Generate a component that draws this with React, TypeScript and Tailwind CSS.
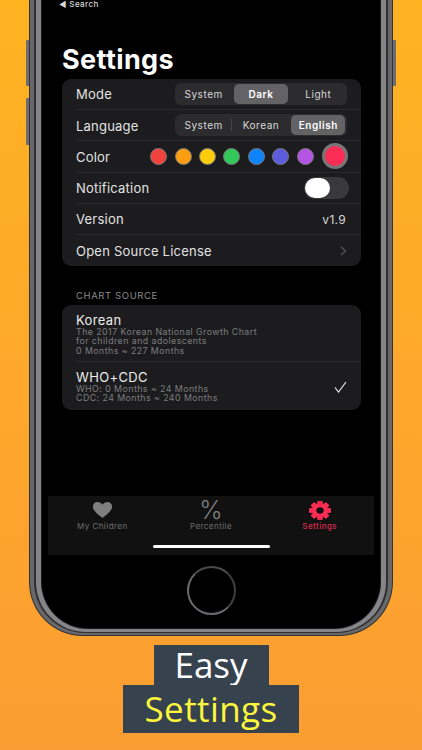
const ui = "font-['Inter',sans-serif]";

function Row({ label, last, children }: { label: string; last?: boolean; children?: React.ReactNode }) {
  return (
    <div className="h-[31.2px] pl-[14px]">
      <div className={`flex h-full items-center justify-between ${last ? "" : "border-b border-[#2a2a2c]"}`}>
        <span className="pt-[2px] text-[13px] tracking-[0.22px] text-[#e2e2e2]">{label}</span>
        {children}
      </div>
    </div>
  );
}

function Segment({ items, active, divider }: { items: string[]; active: number; divider?: boolean }) {
  return (
    <div className="mr-[14px] flex h-[22px] w-[172px] items-center rounded-[6px] bg-[#2c2c2f]">
      {items.map((item, i) => (
        <div key={item} className="relative h-[20px] flex-1 px-[1.500px]">
          <div
            className={`flex h-full items-center justify-center rounded-[5px] text-[10px] tracking-[0.55px] ${
              i === active ? "bg-[#636366] font-semibold text-white" : "text-[#d8d8d8]"
            }`}
          >
            {item}
          </div>
          {divider && i === 0 && <span className="absolute right-0 top-[4px] h-[12px] w-px bg-[#47474a]" />}
        </div>
      ))}
    </div>
  );
}

const dots = ["bg-[#f2423f]", "bg-[#fb9e12]", "bg-[#fdcc0a]", "bg-[#32c95a]", "bg-[#0e84fb]", "bg-[#5d5cdc]", "bg-[#b354e4]"];

function Colors() {
  return (
    <div className="mr-[13px] flex items-center gap-[7.4px]">
      {dots.map((c) => (
        <span key={c} className={`h-[17px] w-[17px] rounded-full border border-[#77777a] ${c}`} />
      ))}
      <span className="ml-[1px] h-[26px] w-[26px] rounded-full border-[3px] border-[#77777a] bg-[#fb2d55]" />
    </div>
  );
}

function Heart() {
  return (
    <svg width="21" height="16" viewBox="0 0 24 20" fill="#7f7f7f">
      <path d="M12 20C5 14.500 0 10.500 0 5.800 0 2.400 2.600 0 5.800 0 8.300 0 10.500 1.200 12 3.400 13.500 1.200 15.700 0 18.200 0 21.400 0 24 2.400 24 5.800 24 10.500 19 14.500 12 20Z" />
    </svg>
  );
}

function Gear() {
  const teeth = [0, 45, 90, 135, 180, 225, 270, 315];
  return (
    <svg width="22" height="19" viewBox="0 0 24 24" preserveAspectRatio="none">
      {teeth.map((a) => (
        <rect key={a} x="9.200" y="0.300" width="5.600" height="23.400" rx="0.800" fill="#fb2d55" transform={`rotate(${a} 12 12)`} />
      ))}
      <circle cx="12" cy="12" r="8.800" fill="#fb2d55" />
      <circle cx="12" cy="12" r="4" fill="#111112" />
    </svg>
  );
}

function Tab({ label, active, children }: { label: string; active?: boolean; children: React.ReactNode }) {
  return (
    <div className="flex w-[109px] flex-col items-center">
      <div className="flex h-[22px] items-center justify-center">{children}</div>
      <span className={`text-[8px] leading-[10px] tracking-[0.45px] ${active ? "font-medium text-[#dc2a4d]" : "text-[#6f6f6f]"}`}>
        {label}
      </span>
    </div>
  );
}

export default function App() {
  return (
    <div className={`flex h-[750px] w-[422px] flex-col items-center overflow-hidden bg-gradient-to-b from-[#ffb321] to-[#fb9d32] ${ui}`}>
      {/* phone, top is cut off by the picture */}
      <div className="relative h-[636px] w-[364px] shrink-0">
        <span className="absolute left-[-3px] top-[40px] h-[46px] w-[3px] rounded-l-[1px] bg-[#6d6d70]" />
        <span className="absolute left-[-3px] top-[98px] h-[47px] w-[3px] rounded-l-[1px] bg-[#6d6d70]" />
        <span className="absolute right-[-3px] top-[40px] h-[46px] w-[3px] rounded-r-[1px] bg-[#6d6d70]" />
        <div className="h-full rounded-b-[54px] bg-[#333335] px-[1px] pb-[1px]">
          <div className="h-full rounded-b-[53px] bg-[#68686b] px-[4px] pb-[2px]">
            <div className="h-full rounded-b-[51px] bg-[#2f2f31] px-[2px] pb-[1px]">
              <div className="h-full rounded-b-[50px] bg-[#858588] px-[5px] pb-[3px]">
                <div className="h-full rounded-b-[47px] bg-[#1a1a1b] px-[1px] pb-[1px]">
                  <div className="flex h-full flex-col rounded-b-[46px] bg-black">
                    <div className="h-[8px] pl-[17px] text-[8px] font-medium leading-[8px] tracking-[0.4px] text-[#d8d8d8]">◄ Search</div>

                    <h1 className="ml-[20px] mt-[37px] text-[27px] font-bold leading-[30px] tracking-[0.4px] text-white">Settings</h1>

                    <div className="mx-[20px] mt-[4px] h-[187px] w-[299px] rounded-[9px] bg-[#1c1c1e]">
                      <Row label="Mode">
                        <Segment items={["System", "Dark", "Light"]} active={1} />
                      </Row>
                      <Row label="Language">
                        <Segment items={["System", "Korean", "English"]} active={2} divider />
                      </Row>
                      <Row label="Color">
                        <Colors />
                      </Row>
                      <Row label="Notification">
                        <div className="mr-[12px] flex h-[22px] w-[45px] items-center rounded-full bg-[#39393d] pl-[1px]">
                          <span className="h-[20px] w-[25px] rounded-full bg-white" />
                        </div>
                      </Row>
                      <Row label="Version">
                        <span className="mr-[15px] pt-[2px] text-[12px] tracking-[0.3px] text-[#d8d8d8]">v1.9</span>
                      </Row>
                      <Row label="Open Source License" last>
                        <svg className="mr-[14px]" width="7" height="10" viewBox="0 0 7 10" fill="none" stroke="#505053" strokeWidth="1.500">
                          <path d="M1 1l4.500 4L1 9" />
                        </svg>
                      </Row>
                    </div>

                    <div className="ml-[34px] mt-[24px] text-[9.500px] leading-[12px] tracking-[0.6px] text-[#8a8a8e]">CHART SOURCE</div>

                    <div className="mx-[20px] mt-[3px] h-[105px] w-[299px] rounded-[9px] bg-[#1c1c1e] pl-[14px]">
                      <div className="h-[57px] border-b border-[#2a2a2c] pt-[9px]">
                        <div className="text-[13px] leading-[13px] tracking-[0.35px] text-[#ececec]">Korean</div>
                        <div className="text-[8.800px] leading-[9.300px] tracking-[0.45px] text-[#7c7c7f]">
                          <div>The 2017 Korean National Growth Chart</div>
                          <div>for children and adolescents</div>
                          <div>0 Months ~ 227 Months</div>
                        </div>
                      </div>
                      <div className="flex items-center justify-between pr-[14px] pt-[9px]">
                        <div>
                          <div className="text-[13px] leading-[13px] tracking-[0.35px] text-[#ececec]">WHO+CDC</div>
                          <div className="text-[8.800px] leading-[9.300px] tracking-[0.45px] text-[#7c7c7f]">
                            <div>WHO: 0 Months ~ 24 Months</div>
                            <div>CDC: 24 Months ~ 240 Months</div>
                          </div>
                        </div>
                        <svg width="13" height="12" viewBox="0 0 13 12" fill="none" stroke="#f0f0f0" strokeWidth="1.100">
                          <path d="M1 6.500l3.500 4.500L12 1" />
                        </svg>
                      </div>
                    </div>

                    <div className="mx-[6px] mt-[86px] flex h-[59px] flex-col bg-[#111112] pt-[3px]">
                      <div className="flex justify-between">
                        <Tab label="My Children">
                          <Heart />
                        </Tab>
                        <Tab label="Percentile">
                          <span className="text-[25px] font-light leading-[22px] text-[#7f7f7f]">%</span>
                        </Tab>
                        <Tab label="Settings" active>
                          <Gear />
                        </Tab>
                      </div>
                      <div className="mx-auto mt-[14px] h-[3px] w-[117px] rounded-full bg-white" />
                    </div>

                    <div className="mx-auto mt-[11px] h-[49px] w-[49px] rounded-full border-2 border-b-[#6a6a6e] border-l-[#6a6a6e] border-r-[#3f3f42] border-t-[#4a4a4d]" />
                  </div>
                </div>
              </div>
            </div>
          </div>
        </div>
      </div>

      {/* caption */}
      <div className="mt-[9px] flex flex-col items-center font-['Open_Sans',sans-serif] text-[35px] leading-[40px]">
        <div className="flex h-[40px] w-[115px] items-center justify-center bg-[#37424f] text-white">Easy</div>
        <div className="flex h-[48px] w-[176px] items-center justify-center bg-[#37424f] tracking-[0.4px] text-[#fdf63c]">Settings</div>
      </div>
    </div>
  );
}
